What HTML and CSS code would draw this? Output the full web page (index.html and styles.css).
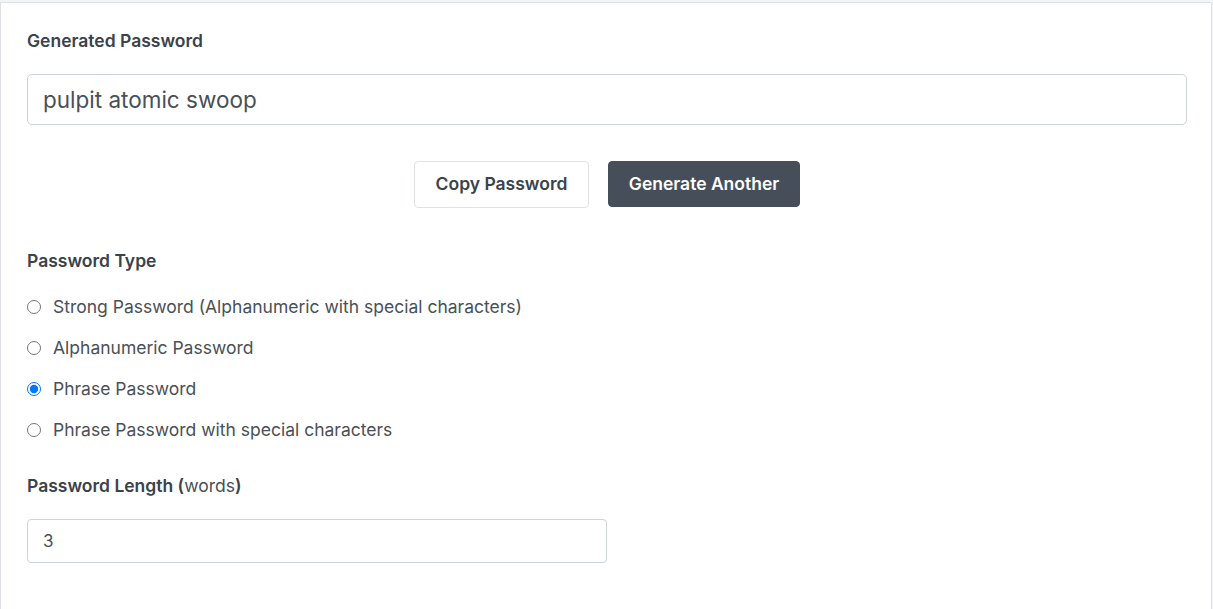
FILE: index.html
```html
<!DOCTYPE html>
<html>
<head>
<meta charset="utf-8">
<link rel="stylesheet" href="styles.css">
</head>
<body>
<div class="card">
  <div class="label">Generated Password</div>
  <input class="pw-output" type="text" value="pulpit atomic swoop">
  <div class="actions">
    <button class="btn btn-light">Copy Password</button>
    <button class="btn btn-dark">Generate Another</button>
  </div>
  <div class="label section">Password Type</div>
  <div class="radios">
    <label class="radio"><input type="radio" name="t"> Strong Password (Alphanumeric with special characters)</label>
    <label class="radio"><input type="radio" name="t"> Alphanumeric Password</label>
    <label class="radio"><input type="radio" name="t" checked> Phrase Password</label>
    <label class="radio"><input type="radio" name="t"> Phrase Password with special characters</label>
  </div>
  <div class="label section2">Password Length (<span class="unit">words</span>)</div>
  <input class="len" type="text" value="3">
</div>
</body>
</html>
```
FILE: styles.css
```css
html, body { margin: 0; padding: 0; }
body {
  background: #f3f4f6;
  font-family: Inter, "Noto Sans", sans-serif;
  padding-top: 2px;
}
.card {
  box-sizing: border-box;
  width: 1212px;
  height: 607px;
  background: #fff;
  border: 1px solid #dde1e6;
  border-bottom: none;
  padding: 26px 24px 0 26px;
  display: flex;
  flex-direction: column;
  align-items: flex-start;
}
.label {
  font-size: 17.5px;
  line-height: 24px;
  font-weight: 600;
  color: #3a424c;
}
.unit { font-weight: 400; color: #495057; }
.pw-output {
  box-sizing: border-box;
  margin-top: 21px;
  width: 1160px;
  height: 51px;
  border: 1px solid #ced4da;
  border-radius: 5px;
  padding: 0 15px;
  font-family: Inter, sans-serif;
  font-size: 22.5px;
  color: #495057;
  outline: none;
}
.actions {
  align-self: stretch;
  display: flex;
  justify-content: center;
  gap: 19px;
  margin-top: 36px;
}
.btn {
  box-sizing: border-box;
  height: 47px;
  font-family: Inter, sans-serif;
  font-size: 17.5px;
  font-weight: 600;
  border-radius: 4px;
  padding: 0 10px 2px;
}
.btn-light {
  background: #fff;
  border: 1px solid #dee2e6;
  color: #3a424c;
  width: 175px;
}
.btn-dark {
  background: #454e59;
  border: 1px solid #454e59;
  color: #fff;
  width: 192px;
  height: 46px;
}
.section { margin-top: 41px; }
.radios {
  display: flex;
  flex-direction: column;
  gap: 17px;
  margin-top: 22px;
}
.radio {
  display: flex;
  align-items: center;
  font-size: 17.5px;
  line-height: 24px;
  color: #495057;
}
.radio input {
  margin: 0 12px 0 0;
  width: 14px;
  height: 14px;
}
.section2 { margin-top: 32px; }
.len {
  box-sizing: border-box;
  margin-top: 21px;
  width: 580px;
  height: 44px;
  border: 1px solid #ced4da;
  border-radius: 4px;
  padding: 0 15px;
  font-family: Inter, sans-serif;
  font-size: 17px;
  color: #495057;
  outline: none;
}
```
